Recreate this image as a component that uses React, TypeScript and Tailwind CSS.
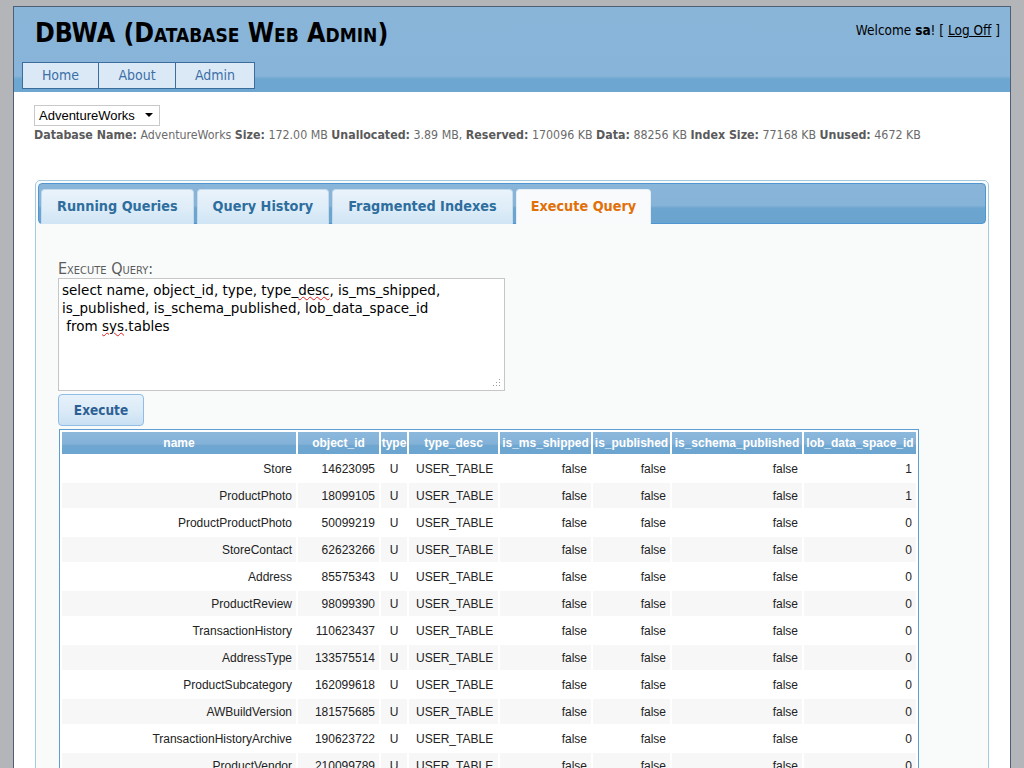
import React from 'react';

const rows: [string, string, string][] = [
  ['Store', '14623095', '1'],
  ['ProductPhoto', '18099105', '1'],
  ['ProductProductPhoto', '50099219', '0'],
  ['StoreContact', '62623266', '0'],
  ['Address', '85575343', '0'],
  ['ProductReview', '98099390', '0'],
  ['TransactionHistory', '110623437', '0'],
  ['AddressType', '133575514', '0'],
  ['ProductSubcategory', '162099618', '0'],
  ['AWBuildVersion', '181575685', '0'],
  ['TransactionHistoryArchive', '190623722', '0'],
  ['ProductVendor', '210099789', '0'],
  ['Vendor', '226099846', '0'],
];

const cols = [
  { label: 'name', w: 'w-[234px]' },
  { label: 'object_id', w: 'w-[81px]' },
  { label: 'type', w: 'w-[26px]' },
  { label: 'type_desc', w: 'w-[89px]' },
  { label: 'is_ms_shipped', w: 'w-[91px]' },
  { label: 'is_published', w: 'w-[77px]' },
  { label: 'is_schema_published', w: 'w-[130px]' },
  { label: 'lob_data_space_id', w: 'w-[112px]' },
];

const tabs = ['Running Queries', 'Query History', 'Fragmented Indexes'];

function App() {
  return (
    <div className="min-h-screen bg-[#b4b5b9] px-[13px] pt-[6px] font-['DejaVu_Sans_Condensed','DejaVu_Sans',sans-serif]">
      <div className="bg-white border border-b-0 border-[#4e6078] min-h-[900px]">
        {/* header */}
        <header className="h-[85px] flex flex-col justify-between bg-[linear-gradient(to_bottom,#89b5d9_0,#87b4d8_69px,#6da6d0_72px,#6da6d0_100%)]">
          <div className="flex justify-between items-start">
            <h1 className="pl-[21px] pt-[11px] text-[26.5px] font-bold text-black [font-variant:small-caps] leading-[30px]">
              DBWA (Database Web Admin)
            </h1>
            <div className="pt-[13px] pr-[10px] text-[13.5px] text-black">
              Welcome <b>sa</b>! [ <span className="underline">Log Off</span> ]
            </div>
          </div>
          <nav className="flex pl-[8px] pb-[3px]">
            {['Home', 'About', 'Admin'].map((t, i) => (
              <div
                key={t}
                className={`h-[27px] flex items-center justify-center bg-[#dbe9f6] border border-[#3c6d9d] text-[14px] text-[#3b6fa6] ${
                  i === 0 ? 'w-[77px]' : i === 1 ? 'w-[77px] border-l-0' : 'w-[79px] border-l-0'
                }`}
              >
                {t}
              </div>
            ))}
          </nav>
        </header>

        <main className="pl-[20px] pr-[21px] pt-[13px]">
          <div className="w-[126px] h-[21px] border border-[#c9c9c9] bg-white flex items-center justify-between pl-[4px] pr-[6px] text-[13px] text-black font-['Liberation_Sans',sans-serif]">
            <span>AdventureWorks</span>
            <svg width="8" height="5" viewBox="0 0 8 5"><path d="M0 0h8L4 4z" fill="#000" /></svg>
          </div>
          <div className="mt-[1px] text-[12.3px] leading-[17px] text-[#6b6b6b] whitespace-nowrap">
            <b className="text-[#5a5a5a]">Database Name:</b> AdventureWorks <b className="text-[#5a5a5a]">Size:</b> 172.00 MB{' '}
            <b className="text-[#5a5a5a]">Unallocated:</b> 3.89 MB, <b className="text-[#5a5a5a]">Reserved:</b> 170096 KB{' '}
            <b className="text-[#5a5a5a]">Data:</b> 88256 KB <b className="text-[#5a5a5a]">Index Size:</b> 77168 KB{' '}
            <b className="text-[#5a5a5a]">Unused:</b> 4672 KB
          </div>

          {/* tabs widget */}
          <div className="mt-[36px] ml-[1px] border border-[#a6c9e2] rounded-[5px] p-[2px] bg-[#f9fbfb]">
            <div className="h-[41px] rounded-[4px] border border-[#4f97d3] bg-[linear-gradient(to_bottom,#89b5d9_0,#86b3d8_55%,#6ca5cf_62%,#6aa4cf_100%)] flex items-end gap-[3px] pl-[2px]">
              {tabs.map((t) => (
                <div
                  key={t}
                  className="h-[35px] -mb-[1px] px-[15px] flex items-center rounded-t-[4px] border border-b-0 border-[#c5dbec] bg-[linear-gradient(to_bottom,#e9f3fb_0,#dfedf8_50%,#d0e5f5_100%)] text-[14.3px] font-bold text-[#2e6e9e]"
                >
                  {t}
                </div>
              ))}
              <div className="h-[35px] -mb-[1px] px-[14px] flex items-center rounded-t-[4px] border border-b-0 border-[#e6eef5] bg-[#f8fafb] text-[14.3px] font-bold text-[#e17009]">
                Execute Query
              </div>
            </div>

            <div className="pl-[20px] pt-[35px] pb-[40px]">
              <div className="text-[16px] text-[#5b5b5b] [font-variant:small-caps] leading-[19px]">Execute Query:</div>
              <div className="relative w-[447px] h-[113px] border border-[#c6c6c6] bg-white px-[3px] pt-[2px] font-['DejaVu_Sans',sans-serif] text-[13.5px] leading-[18px] text-black">
                <div>
                  select name, object_id, type, type_<span className="underline decoration-wavy decoration-[#e02020] decoration-[1px]">desc</span>, is_ms_shipped,
                </div>
                <div>is_published, is_schema_published, lob_data_space_id</div>
                <div>
                  &nbsp;from <span className="underline decoration-wavy decoration-[#e02020] decoration-[1px]">sys</span>.tables
                </div>
                <svg className="absolute right-[3px] bottom-[3px]" width="8" height="8" viewBox="0 0 8 8">
                  <rect x="6" y="0" width="1" height="1" fill="#9a9a9a" />
                  <rect x="3" y="3" width="1" height="1" fill="#9a9a9a" />
                  <rect x="6" y="3" width="1" height="1" fill="#9a9a9a" />
                  <rect x="0" y="6" width="1" height="1" fill="#9a9a9a" />
                  <rect x="3" y="6" width="1" height="1" fill="#9a9a9a" />
                  <rect x="6" y="6" width="1" height="1" fill="#9a9a9a" />
                </svg>
              </div>
              <button className="mt-[3px] block w-[86px] h-[32px] rounded-[4px] border border-[#8fbde5] bg-[linear-gradient(to_bottom,#e6f1fa_0,#dcebf7_50%,#c9e0f3_100%)] text-[13.5px] font-bold text-[#2e6193]">
                Execute
              </button>

              <table className="mt-[3px] ml-[1px] table-fixed border-separate border-spacing-[2px] border border-[#5e9fd3] bg-white font-['Liberation_Sans',sans-serif] text-[12px] text-[#222]">
                <thead>
                  <tr>
                    {cols.map((c) => (
                      <th
                        key={c.label}
                        className={`${c.w} h-[22px] p-0 font-bold text-white bg-[linear-gradient(to_bottom,#8cb8dc_0,#83b1d8_55%,#6fa7d1_60%,#6ba5d0_100%)]`}
                      >
                        {c.label}
                      </th>
                    ))}
                  </tr>
                </thead>
                <tbody>
                  {rows.map(([name, id, lob], i) => {
                    const bg = i % 2 === 0 ? 'bg-white' : 'bg-[#f7f7f7]';
                    return (
                      <tr key={name} className="h-[25px]">
                        <td className={`${bg} text-right pr-[4px]`}>{name}</td>
                        <td className={`${bg} text-right pr-[4px]`}>{id}</td>
                        <td className={`${bg} text-center`}>U</td>
                        <td className={`${bg} text-left pl-[7px]`}>USER_TABLE</td>
                        <td className={`${bg} text-right pr-[4px]`}>false</td>
                        <td className={`${bg} text-right pr-[4px]`}>false</td>
                        <td className={`${bg} text-right pr-[4px]`}>false</td>
                        <td className={`${bg} text-right pr-[4px]`}>{lob}</td>
                      </tr>
                    );
                  })}
                </tbody>
              </table>
            </div>
          </div>
        </main>
      </div>
    </div>
  );
}

export default App;
